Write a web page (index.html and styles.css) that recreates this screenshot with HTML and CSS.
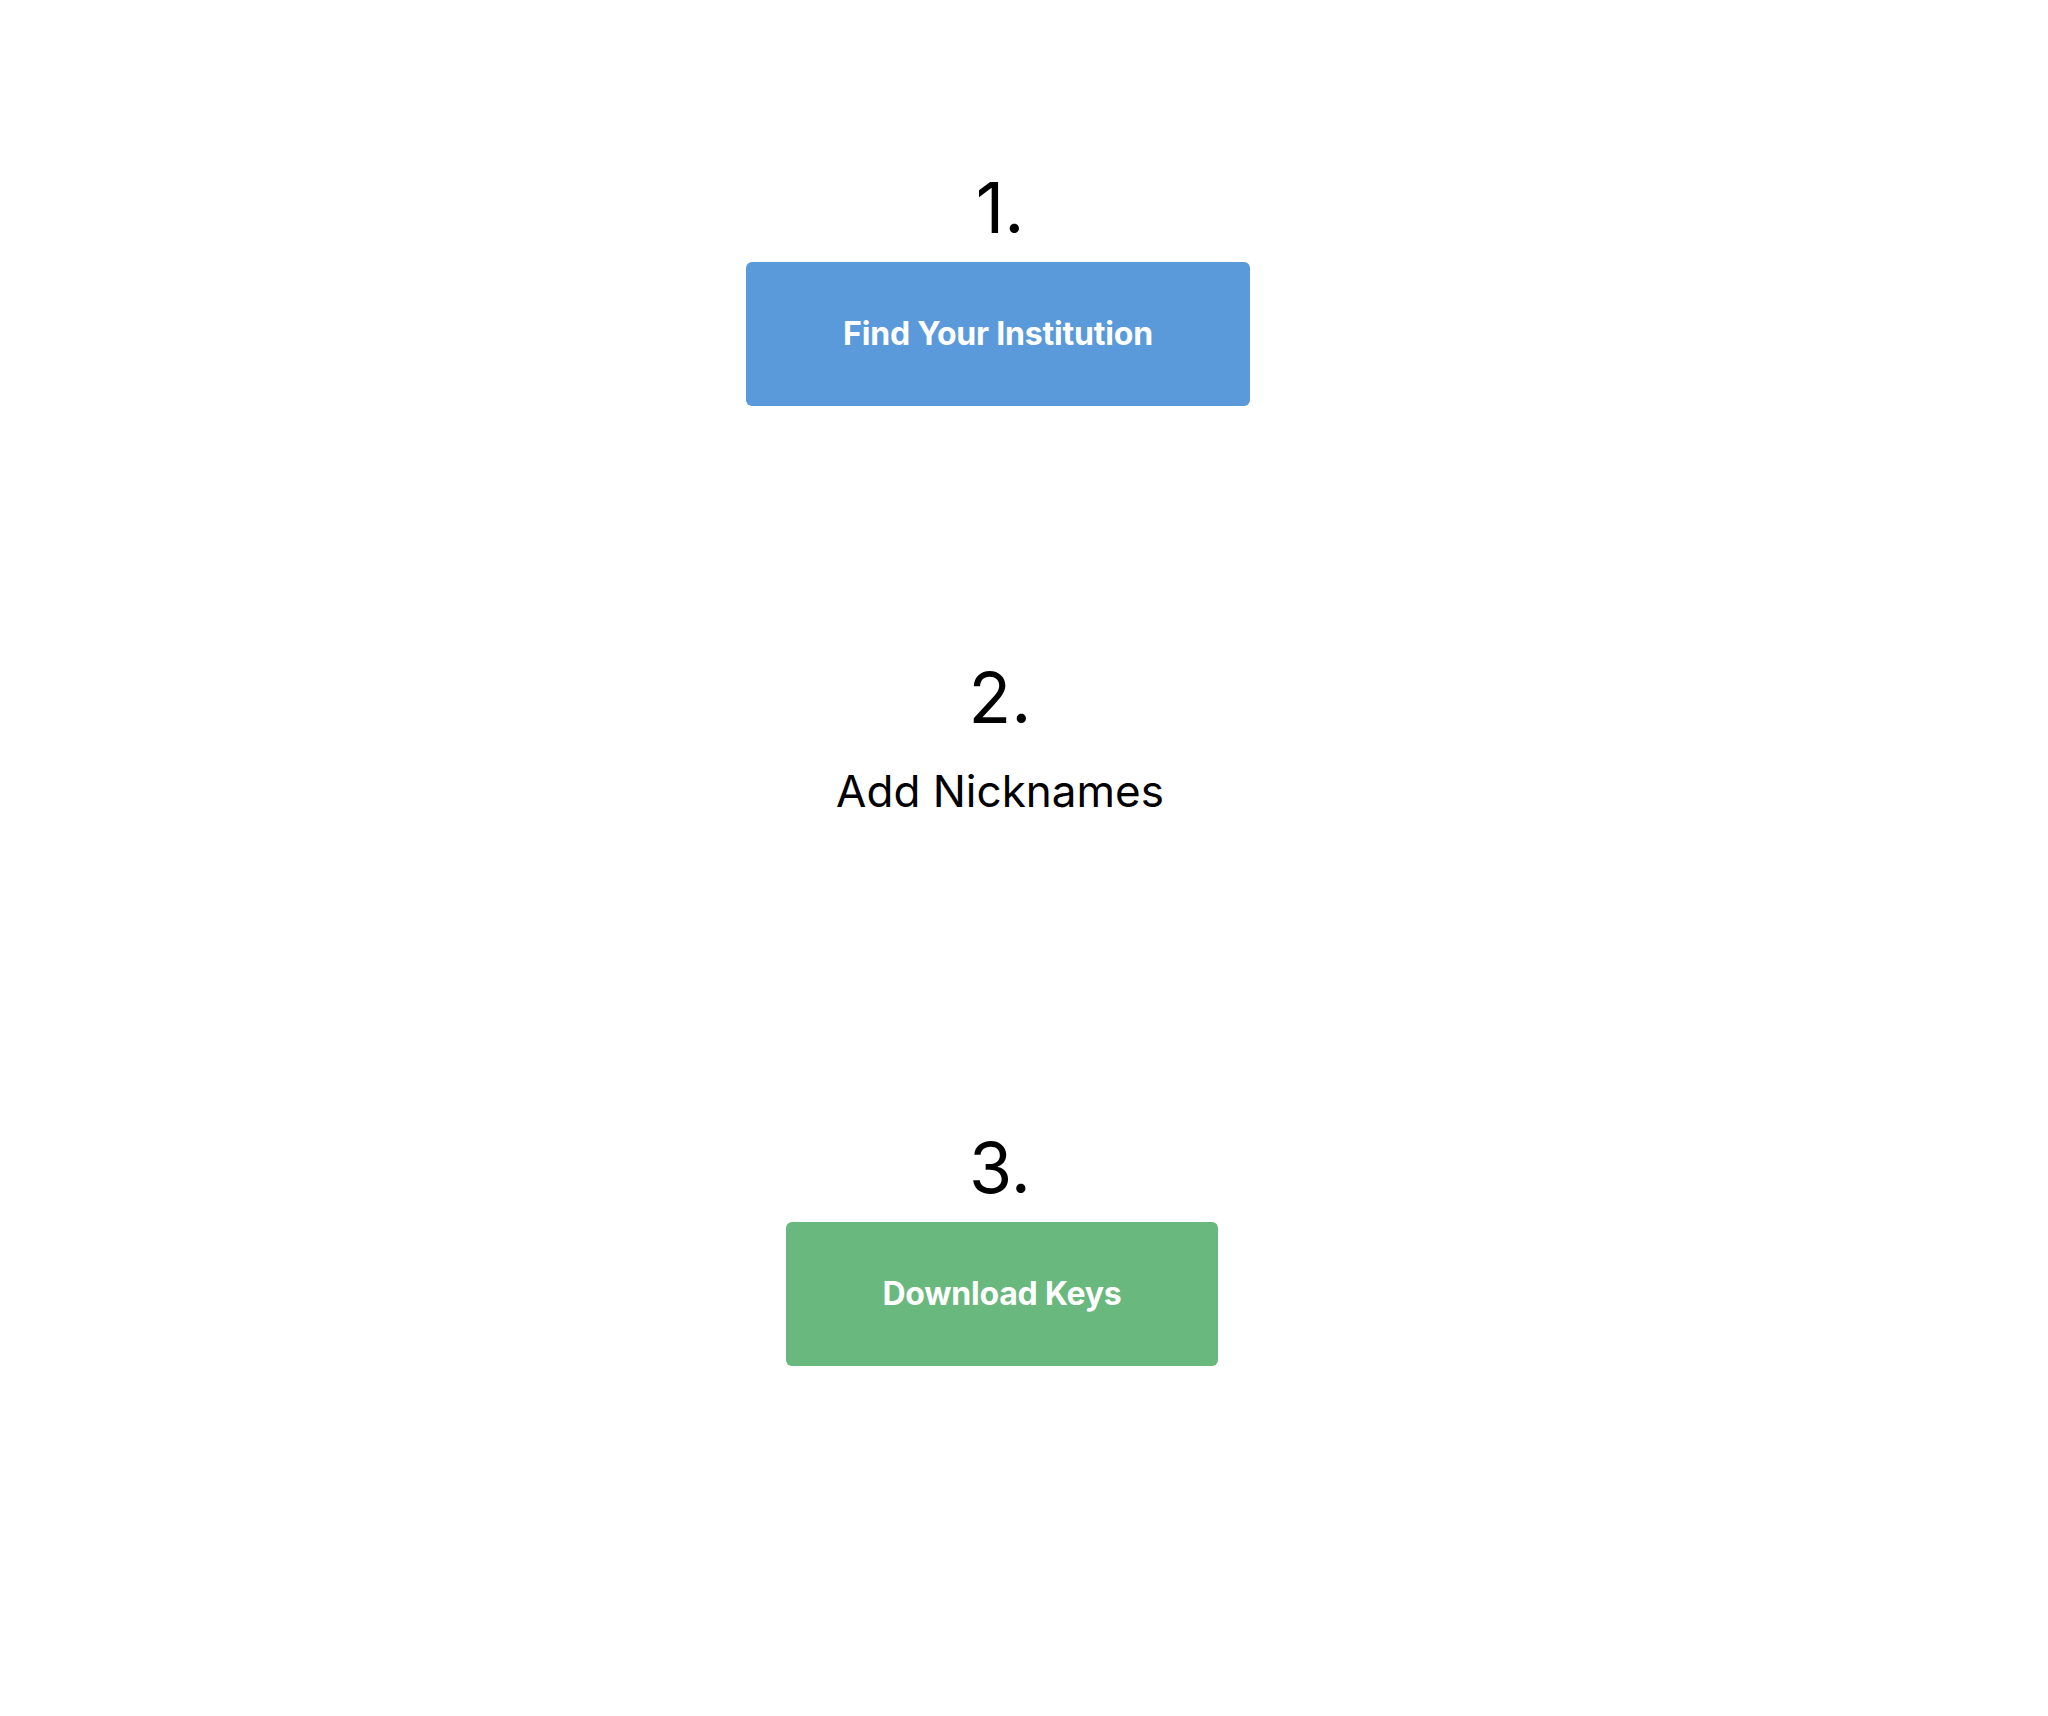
FILE: index.html
```html
<!DOCTYPE html>
<html lang="en">
<head>
<meta charset="utf-8">
<title>Steps</title>
<link rel="stylesheet" href="styles.css">
</head>
<body>
<main class="page">
  <section class="step step-one">
    <div class="step-num">1.</div>
    <button class="btn btn-blue">Find Your Institution</button>
  </section>
  <section class="step step-two">
    <div class="step-num">2.</div>
    <div class="step-label">Add Nicknames</div>
  </section>
  <section class="step step-three">
    <div class="step-num">3.</div>
    <button class="btn btn-green">Download Keys</button>
  </section>
</main>
</body>
</html>
```
FILE: styles.css
```css
html, body {
  margin: 0;
  padding: 0;
  background: #ffffff;
}

body {
  font-family: Inter, "Liberation Sans", sans-serif;
  color: #000000;
}

.page {
  width: 2000px;
  display: flex;
  flex-direction: column;
  align-items: center;
  padding-top: 168px;
}

.step {
  display: flex;
  flex-direction: column;
  align-items: center;
  gap: 14px;
}

.step-two {
  margin-top: 252px;
  gap: 25px;
}

.step-three {
  margin-top: 309px;
}

.step-num {
  font-size: 70px;
  line-height: 80px;
  font-weight: 400;
}

.step-label {
  font-size: 44px;
  line-height: 56px;
  font-weight: 400;
}

.btn {
  font-family: Inter, "Liberation Sans", sans-serif;
  font-size: 32px;
  font-weight: 700;
  line-height: 48px;
  letter-spacing: -0.2px;
  color: #ffffff;
  border: none;
  border-radius: 6px;
  padding: 48px 97px;
  cursor: pointer;
}

.btn-blue {
  background: #5a9adb;
  margin-right: 4px;
}

.btn-green {
  background: #69b87e;
  margin-left: 4px;
  padding: 48px 96px;
}
```
